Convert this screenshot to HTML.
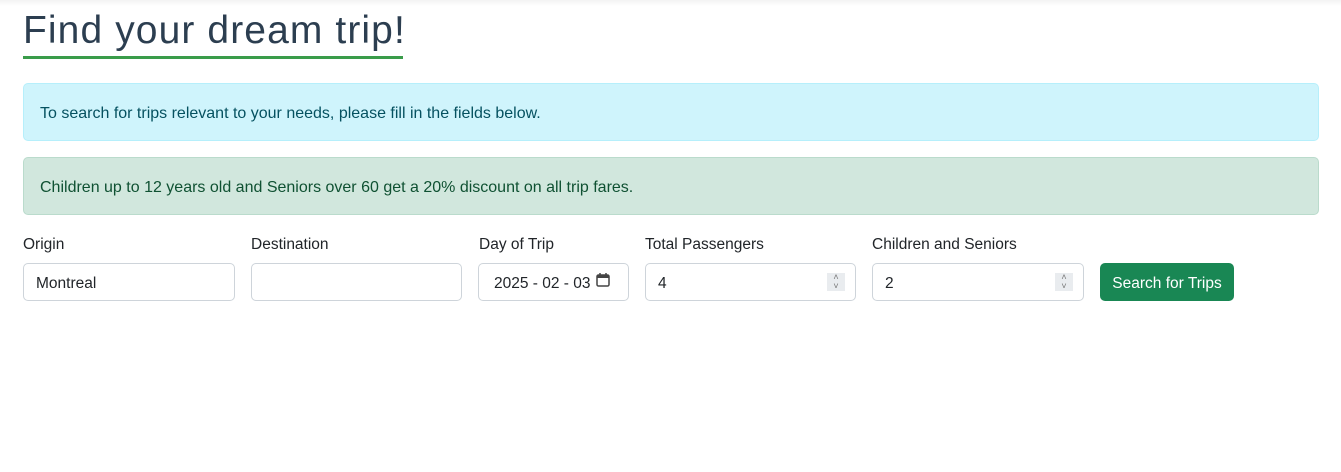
<!DOCTYPE html>
<html><head><style>
body{margin:0;width:1341px;height:472px;background:#fff;font-family:"Liberation Sans",sans-serif;position:relative;overflow:hidden;color:#212529}
.top{position:absolute;left:0;top:0;width:1341px;height:6px;background:linear-gradient(#f3f3f3,#fff)}
h1{position:absolute;left:23px;top:8px;margin:0;font-size:39px;font-weight:500;color:#2c3e50;letter-spacing:1.1px;line-height:46px;border-bottom:3px solid #3a9c4a;padding-bottom:2px;width:380px;white-space:nowrap}
.al{position:absolute;left:23px;width:1296px;height:58px;border:1px solid;border-radius:5px;box-sizing:border-box;font-size:16px;line-height:60px;padding-left:16px}
.a1{top:83px;background:#cff4fc;border-color:#b6effb;color:#055160}
.a2{top:157px;background:#d1e7dd;border-color:#badbcc;color:#0f5132}
.lb{position:absolute;top:236px;font-size:15.5px}
.in{position:absolute;top:263px;height:38px;border:1px solid #ced4da;border-radius:5px;box-sizing:border-box;font-size:15.5px;line-height:40px;padding-left:12px}
.sp{position:absolute;right:10px;top:9px;width:18px;height:18px;background:#e9ecef;font-size:9px;line-height:9px;text-align:center;color:#777}
.btn{position:absolute;left:1100px;top:263px;width:134px;height:38px;background:#198754;color:#fff;border-radius:5px;font-size:15.5px;line-height:41px;text-align:center}
</style></head><body>
<div class="top"></div>
<h1>Find your dream trip!</h1>
<div class="al a1">To search for trips relevant to your needs, please fill in the fields below.</div>
<div class="al a2">Children up to 12 years old and Seniors over 60 get a 20% discount on all trip fares.</div>
<div class="lb" style="left:23px">Origin</div>
<div class="lb" style="left:251px">Destination</div>
<div class="lb" style="left:479px">Day of Trip</div>
<div class="lb" style="left:645px">Total Passengers</div>
<div class="lb" style="left:872px">Children and Seniors</div>
<div class="in" style="left:23px;width:212px">Montreal</div>
<div class="in" style="left:251px;width:211px"></div>
<div class="in" style="left:478px;width:151px;padding-left:15px">2025 - 02 - 03 <svg width="16" height="16" viewBox="0 0 16 16" style="vertical-align:0px"><rect x="2" y="3" width="12" height="11" rx="1.5" fill="none" stroke="#444" stroke-width="1.5"/><rect x="2" y="3" width="12" height="3" fill="#444"/><path d="M5 1v3M11 1v3" stroke="#444" stroke-width="1.5"/></svg></div>
<div class="in" style="left:645px;width:211px">4<div class="sp">˄<br>˅</div></div>
<div class="in" style="left:872px;width:212px">2<div class="sp">˄<br>˅</div></div>
<div class="btn">Search for Trips</div>
</body></html>
